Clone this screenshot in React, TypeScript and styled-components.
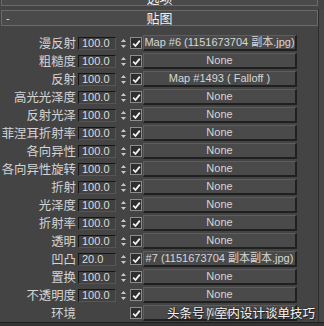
import styled, { createGlobalStyle } from 'styled-components';
import { FC } from 'react';

const GlobalStyle = createGlobalStyle`
  html, body {
    margin: 0;
    padding: 0;
    background: #444444;
  }
  body {
    width: 324px;
    height: 326px;
    overflow: hidden;
    font-family: "Liberation Sans", "Noto Sans CJK SC", sans-serif;
  }
`;

interface IMapRow {
  label: string;
  value?: string;
  map: string;
}

const rows: IMapRow[] = [
  { label: '漫反射', value: '100.0', map: 'Map #6 (1151673704 副本.jpg)' },
  { label: '粗糙度', value: '100.0', map: 'None' },
  { label: '反射', value: '100.0', map: 'Map #1493  ( Falloff )' },
  { label: '高光光泽度', value: '100.0', map: 'None' },
  { label: '反射光泽', value: '100.0', map: 'None' },
  { label: '菲涅耳折射率', value: '100.0', map: 'None' },
  { label: '各向异性', value: '100.0', map: 'None' },
  { label: '各向异性旋转', value: '100.0', map: 'None' },
  { label: '折射', value: '100.0', map: 'None' },
  { label: '光泽度', value: '100.0', map: 'None' },
  { label: '折射率', value: '100.0', map: 'None' },
  { label: '透明', value: '100.0', map: 'None' },
  { label: '凹凸', value: '20.0', map: '#7 (1151673704 副本副本.jpg)' },
  { label: '置换', value: '100.0', map: 'None' },
  { label: '不透明度', value: '100.0', map: 'None' },
  { label: '环境', map: 'None' },
];

const Screen = styled.div`
  position: relative;
  display: flex;
  width: 324px;
  height: 326px;
  background: #444444;
`;

const Panel = styled.div`
  width: 318px;
  display: flex;
  flex-direction: column;
`;

const ScrollStrip = styled.div`
  flex: 1;
  margin-top: 9px;
  border-left: 1px solid #2c2c2c;
  background: #474747;
`;

const RolloutBar = styled.div<{ cut?: boolean }>`
  height: 14px;
  margin: ${p => (p.cut ? '-10px 0 4px 1px' : '0 0 0 1px')};
  border: 1px solid #6a6a6a;
  background: #4a4a4a;
  display: flex;
  align-items: center;
  justify-content: center;
  position: relative;
  color: #f0f0f0;
  font-family: "Noto Sans CJK SC", sans-serif;
  font-size: 13px;
  line-height: 14px;
`;

const Toggle = styled.span`
  position: absolute;
  left: 4px;
  top: 0;
  font-family: "Liberation Sans", sans-serif;
  font-size: 11px;
  color: #d8d8d8;
`;

const Rows = styled.div`
  display: flex;
  flex-direction: column;
  padding-top: 8px;
`;

const Row = styled.div`
  display: grid;
  grid-template-columns: 76px 40px 9px 12px 160px;
  align-items: center;
  height: 18px;
`;

const Label = styled.div`
  text-align: right;
  font-family: "Noto Sans CJK SC", sans-serif;
  font-size: 12.4px;
  line-height: 18px;
  color: #d4d4d4;
  white-space: nowrap;
`;

const ValueBox = styled.div`
  margin-left: 2px;
  height: 11px;
  border-top: 1px solid #161616;
  border-left: 1px solid #161616;
  border-bottom: 1px solid #565656;
  border-right: 1px solid #565656;
  background: #414141;
  color: #dcdcdc;
  font-size: 11px;
  line-height: 11px;
  padding-left: 3px;
`;

const Spinner = styled.div`
  margin-left: 3px;
  width: 9px;
  height: 13px;
  display: flex;
  align-items: center;
  justify-content: center;
`;

const Check = styled.div`
  margin-left: 5px;
  width: 10px;
  height: 10px;
  border: 1px solid #8c8c8c;
  background: #2e2e2e;
  display: flex;
  align-items: center;
  justify-content: center;
`;

const MapButton = styled.div`
  margin-left: 6px;
  height: 13px;
  border-top: 1px solid #5e5e5e;
  border-left: 1px solid #5e5e5e;
  border-bottom: 2px solid #202020;
  border-right: 2px solid #202020;
  background: #4a4a4a;
  color: #d6d6d6;
  font-size: 11px;
  line-height: 13px;
  text-align: center;
  white-space: nowrap;
  overflow: hidden;
  font-family: "Liberation Sans", "Noto Sans CJK SC", sans-serif;
`;

const BottomEdge = styled.div`
  position: absolute;
  left: 0;
  right: 0;
  bottom: 0;
  height: 3px;
  border-top: 1px solid #1e1e1e;
  background: #333333;
`;

const Watermark = styled.div`
  position: absolute;
  right: 9px;
  bottom: 5px;
  font-family: "Noto Sans CJK SC", sans-serif;
  font-size: 12.5px;
  line-height: 16px;
  color: #f4f4f4;
  text-shadow: 0 0 2px #222, 1px 1px 1px #222;
  white-space: nowrap;
`;

const SpinArrows: FC = () => (
  <svg width="7" height="11" viewBox="0 0 7 11">
    <path d="M3.5 1 L6 4 L1 4 Z" fill="#c8c8c8" />
    <path d="M3.5 10 L6 7 L1 7 Z" fill="#c8c8c8" />
  </svg>
);

const CheckMark: FC = () => (
  <svg width="9" height="9" viewBox="0 0 9 9">
    <path d="M1.2 4.6 L3.5 7 L7.8 1.6" stroke="#f2f2f2" strokeWidth="1.8" fill="none" />
  </svg>
);

export default function App() {
  return (
    <Screen>
      <GlobalStyle />
      <Panel>
        <RolloutBar cut>选项</RolloutBar>
        <RolloutBar>
          <Toggle>-</Toggle>贴图
        </RolloutBar>
        <Rows>
          {rows.map(r => (
            <Row key={r.label}>
              <Label>{r.label}</Label>
              {r.value ? <ValueBox>{r.value}</ValueBox> : <span />}
              {r.value ? (
                <Spinner>
                  <SpinArrows />
                </Spinner>
              ) : (
                <span />
              )}
              <Check>
                <CheckMark />
              </Check>
              <MapButton>{r.map}</MapButton>
            </Row>
          ))}
        </Rows>
      </Panel>
      <ScrollStrip />
      <BottomEdge />
      <Watermark>头条号 / 室内设计谈单技巧</Watermark>
    </Screen>
  );
}
